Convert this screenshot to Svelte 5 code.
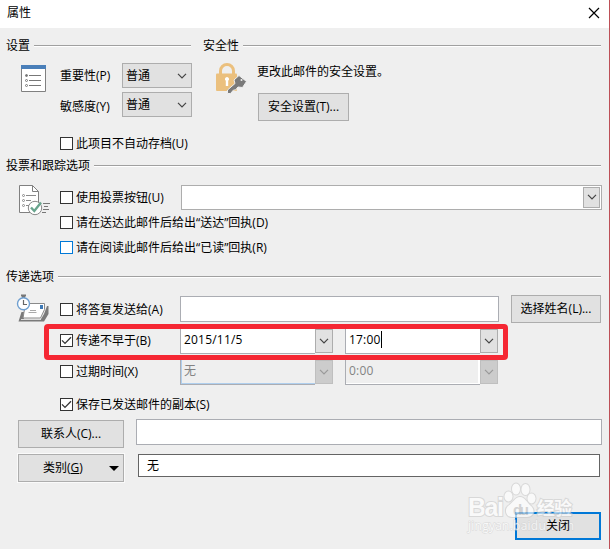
<script lang="ts">
	let readReceipt = $state(false);
	let deliveredReceipt = $state(false);
	let noArchive = $state(false);
	let useVoting = $state(false);
	let replyTo = $state(false);
	let delayed = $state(true);
	let expires = $state(false);
	let saveCopy = $state(true);
</script>

{#snippet heading(title: string)}
	<div class="heading">
		<span>{title}</span>
		<i class="rule"></i>
	</div>
{/snippet}

{#snippet chevron()}
	<svg class="chevron" width="10" height="6" viewBox="0 0 10 6">
		<path d="M1 .8 5 4.8 9 .8" fill="none" stroke="currentColor" stroke-width="1.2" />
	</svg>
{/snippet}

{#snippet check(label: string, checked: boolean, toggle: () => void, focused = false)}
	<div class="check" class:focused role="checkbox" aria-checked={checked} tabindex="-1" onclick={toggle} onkeydown={toggle}>
		<span class="box">
			{#if checked}
				<svg width="11" height="11" viewBox="0 0 11 11">
					<path d="M1 5.4 4 8.4 10 2.2" fill="none" stroke="#333" stroke-width="1.3" />
				</svg>
			{/if}
		</span>
		<span class="label">{label}</span>
	</div>
{/snippet}

{#snippet picker(value: string, disabled = false, caret = false, hot = false)}
	<div class="picker" class:disabled class:hot>
		<div class="field">{value}{#if caret}<i class="caret"></i>{/if}</div>
		<div class="drop">{@render chevron()}</div>
	</div>
{/snippet}

<div class="dialog">
	<header>
		<span>属性</span>
		<svg width="12" height="12" viewBox="0 0 12 12">
			<path d="M1 1 11 11M11 1 1 11" stroke="#000" stroke-width="1.2" />
		</svg>
	</header>

	<div class="top">
		<section class="settings">
			{@render heading('设置')}
			<div class="settings-body">
				<svg class="icon-list" width="25" height="27" viewBox="0 0 25 27">
					<path d="M.5 3.5h24v23H.5z" fill="#fff" stroke="#808080" />
					<path d="M0 0h25v4H0z" fill="#4a7fb9" />
					<g fill="#fff" stroke="#777">
						<circle cx="5.5" cy="10.5" r="1" fill="#777" />
						<circle cx="5.5" cy="15.5" r="1" />
						<circle cx="5.5" cy="20.5" r="1" />
						<path d="M8 10.5h12M8 15.5h12M8 20.5h12" />
					</g>
				</svg>
				<div class="levels">
					<div class="level">
						<span>重要性(P)</span>
						<div class="select">普通{@render chevron()}</div>
					</div>
					<div class="level second">
						<span>敏感度(Y)</span>
						<div class="select">普通{@render chevron()}</div>
					</div>
				</div>
			</div>
			<div class="archive">
				{@render check('此项目不自动存档(U)', noArchive, () => (noArchive = !noArchive))}
			</div>
		</section>

		<section class="security">
			{@render heading('安全性')}
			<div class="security-body">
				<svg width="31" height="32" viewBox="0 0 31 32">
					<path d="M4.5 11V8a6.5 6.5 0 0 1 13 0v3" fill="none" stroke="#ebc07e" stroke-width="3" />
					<rect y="10.5" width="21" height="17.5" rx="1" fill="#ebc07e" />
					<path d="M11 14a2.1 2.1 0 0 1 1.2 3.8V23H9.800v-5.200A2.100 2.100 0 0 1 11 14z" fill="#fff" />
					<path d="M11.500 27 19 20.500 18 17l5-4.500 7.500 6-4 6-4.500-.5-2.500 3h-2l-3 3.500h-3z" fill="#7a7a7a" stroke="#efefef" />
					<circle cx="25.500" cy="17" r="1" fill="#efefef" />
				</svg>
				<div>
					<p>更改此邮件的安全设置。</p>
					<button class="secure-btn">安全设置(T)...</button>
				</div>
			</div>
		</section>
	</div>

	<section class="voting">
		{@render heading('投票和跟踪选项')}
		<div class="with-icon">
			<svg class="icon-vote" width="32" height="32" viewBox="0 0 32 32">
				<path d="M1.500 1.500h13l6 6v21h-19z" fill="#fff" stroke="#808080" />
				<path d="M14.500 1.500v6h6" fill="none" stroke="#808080" />
				<g fill="#fff" stroke="#8a8a8a">
					<circle cx="5.500" cy="11.500" r="1" />
					<circle cx="5.500" cy="16.500" r="1" />
					<circle cx="5.500" cy="21.500" r="1" />
					<path d="M8 11.500h10M8 16.500h5M8 21.500h3" />
				</g>
				<circle cx="17" cy="24" r="6.700" fill="#fff" stroke="#888" />
				<path d="M13 23.500 16.300 27 23 18.500" fill="none" stroke="#69a58e" stroke-width="2.400" />
				<path d="M25 19.500h7M26 22.500h4M25 25.500h6M24 28.500h4" stroke="#777" />
			</svg>
			<div class="checks">
				<div class="vote-row">
					{@render check('使用投票按钮(U)', useVoting, () => (useVoting = !useVoting))}
					<div class="combo"><div class="drop">{@render chevron()}</div></div>
				</div>
				<div class="receipt">
					{@render check('请在送达此邮件后给出“送达”回执(D)', deliveredReceipt, () => (deliveredReceipt = !deliveredReceipt))}
				</div>
				<div class="receipt">
					{@render check('请在阅读此邮件后给出“已读”回执(R)', readReceipt, () => (readReceipt = !readReceipt), true)}
				</div>
			</div>
		</div>
	</section>

	<section class="delivery">
		{@render heading('传递选项')}
		<div class="with-icon">
			<svg class="icon-mail" width="33" height="30" viewBox="0 0 33 30">
				<path d="M2.500 27.500 5.500 18H8v7h17l3-5 3-8h1.500v8L28 27.500z" fill="#7a7a7a" />
				<path d="M5 25.500h20" stroke="#ddd" />
				<path d="M9.500 9.500h19v6l-4 8.500H7z" fill="#fff" stroke="#8a8a8a" />
				<path d="M14 16.500h6M12.500 18.500h8" stroke="#aaa" />
				<path d="M24 11h3v4h-3z" fill="#3d78b5" />
				<path d="M5 .5h5v2H9V4H6V2.500H5z" fill="#777" />
				<circle cx="7.500" cy="9.800" r="6" fill="#fff" stroke="#6f9fd0" stroke-width="1.400" />
				<path d="M7.500 6v4.500H11" fill="none" stroke="#666" stroke-width="1.200" />
			</svg>
			<div class="checks">
				<div class="reply-row">
					{@render check('将答复发送给(A)', replyTo, () => (replyTo = !replyTo))}
					<div class="text-input"></div>
					<button>选择姓名(L)...</button>
				</div>
				<div class="marked">
					<div class="time-row">
						{@render check('传递不早于(B)', delayed, () => (delayed = !delayed))}
						{@render picker('2015/11/5')}
						{@render picker('17:00', false, true)}
					</div>
				</div>
				<div class="time-row">
					{@render check('过期时间(X)', expires, () => (expires = !expires))}
					{@render picker('无', true, false, true)}
					{@render picker('0:00', true)}
				</div>
				<div class="save-row">
					{@render check('保存已发送邮件的副本(S)', saveCopy, () => (saveCopy = !saveCopy))}
				</div>
			</div>
		</div>
	</section>

	<div class="contacts">
		<button>联系人(C)...</button>
		<div class="text-input"></div>
	</div>
	<div class="categories">
		<button>
			<span>类别(<u>G</u>)</span>
			<svg width="10" height="5" viewBox="0 0 10 5"><path d="M0 0h10L5 5z" /></svg>
		</button>
		<div class="category">无</div>
	</div>

	<footer>
		<button class="primary"><span>关闭</span></button>
	</footer>

	<svg class="watermark" width="112" height="58" viewBox="0 0 112 58">
		<g fill="#fff" stroke="#cdcdcd" stroke-width="2" paint-order="stroke">
			<text class="brand" x="2" y="35" textLength="36">Bai</text>
			<ellipse cx="42.500" cy="15.500" rx="4" ry="5" />
			<ellipse cx="50" cy="8" rx="4" ry="5.500" />
			<ellipse cx="59.500" cy="8.500" rx="4" ry="5.500" />
			<ellipse cx="65.500" cy="17.500" rx="4" ry="5" />
			<path d="M54 16c5 0 7 6 11 9 5 5 2 11-4 11H46c-6 0-8-7-4-11 5-3 7-9 12-9z" />
			<text class="cn" x="71" y="34" textLength="35">经验</text>
		</g>
		<text class="du" x="47" y="34" textLength="16">du</text>
		<text class="site" x="2" y="49" textLength="106">jingyan.baidu.com</text>
	</svg>
</div>

<style>
	:global(body) {
		margin: 0;
	}

	.dialog {
		position: relative;
		box-sizing: border-box;
		width: 610px;
		height: 549px;
		overflow: hidden;
		background: #efefef;
		border-right: 1px solid #bd5057;
		color: #000;
		font: 12px/18px 'Open Sans', 'Noto Sans CJK SC', sans-serif;
		white-space: nowrap;
	}

	header {
		display: flex;
		justify-content: space-between;
		align-items: center;
		box-sizing: border-box;
		height: 28px;
		padding: 0 9px 3px 7px;
		background: #fff;
	}

	button {
		box-sizing: border-box;
		height: 28px;
		padding: 0;
		border: 1px solid #adadad;
		background: #e1e1e1;
		color: #000;
		font: inherit;
		white-space: nowrap;
	}

	.heading {
		display: flex;
		align-items: center;
		gap: 4px;
		height: 18px;
	}

	.rule {
		flex: 1;
		height: 1px;
		background: #a0a0a0;
		border-bottom: 1px solid #fff;
	}

	.chevron {
		display: block;
		color: #444;
	}

	.top {
		display: flex;
		gap: 12px;
		height: 129px;
		padding: 9px 8px 0 6px;
		box-sizing: border-box;
	}

	.settings {
		width: 185px;
	}

	.settings-body {
		display: flex;
		gap: 14px;
		padding: 8px 0 0 15px;
	}

	.icon-list {
		flex-shrink: 0;
		margin-top: 2px;
	}

	.level {
		display: flex;
		width: 132px;
		justify-content: space-between;
		align-items: center;
	}

	.second {
		margin-top: 4px;
	}

	.second > span {
		padding-top: 4px;
	}

	.select {
		display: flex;
		box-sizing: border-box;
		align-items: center;
		justify-content: space-between;
		width: 70px;
		height: 25px;
		padding: 0 4px 0 3px;
		border: 1px solid #adadad;
		background: #e1e1e1;
	}

	.archive {
		padding: 17px 0 0 54px;
	}

	.security {
		flex: 1;
	}

	.security-body {
		display: flex;
		gap: 10px;
		padding: 8px 0 0 13px;
	}

	p {
		margin: 0 0 12px;
	}

	.secure-btn {
		width: 91px;
		margin-left: 1px;
	}

	.check {
		display: flex;
		align-items: center;
		gap: 3px;
		height: 18px;
	}

	.label {
		padding-top: 1px;
	}

	.box {
		box-sizing: border-box;
		width: 13px;
		height: 13px;
		border: 1px solid #333;
		background: #fff;
	}

	.box svg {
		display: block;
	}

	.focused .box {
		border-color: #0078d7;
	}

	.voting {
		height: 111px;
		padding: 0 8px 0 6px;
	}

	.with-icon {
		display: flex;
	}

	.icon-vote {
		margin: 9px 10px 0 12px;
	}

	.icon-mail {
		margin: 8px 11px 0 10px;
	}

	.checks {
		flex: 1;
	}

	.vote-row {
		display: flex;
		justify-content: space-between;
		align-items: center;
		padding-top: 8px;
		height: 28px;
		margin-right: -1px;
	}

	.combo {
		display: flex;
		justify-content: flex-end;
		box-sizing: border-box;
		width: 421px;
		height: 25px;
		padding: 1px;
		border: 1px solid #adadad;
		background: #fff;
	}

	.drop {
		display: flex;
		box-sizing: border-box;
		align-items: center;
		justify-content: center;
		width: 18px;
		border: 1px solid #adadad;
		background: #e1e1e1;
	}

	.combo .drop {
		width: 17px;
	}

	.receipt {
		height: 25px;
	}

	.vote-row + .receipt {
		margin-top: 2px;
	}

	.delivery {
		height: 152px;
		padding: 0 8px 0 6px;
	}

	.reply-row {
		display: flex;
		align-items: center;
		padding-top: 9px;
	}

	.reply-row .check,
	.time-row .check {
		width: 120px;
	}

	.text-input {
		box-sizing: border-box;
		height: 26px;
		border: 1px solid #abadb3;
		background: #fff;
	}

	.reply-row .text-input {
		width: 319px;
		margin-right: 12px;
	}

	.reply-row button {
		width: 90px;
	}

	.marked {
		box-sizing: border-box;
		width: 464px;
		height: 36px;
		margin: 1px 0 0 -16px;
		padding-left: 11px;
		border: 5px solid #f52733;
		border-radius: 4px;
	}

	.time-row {
		display: flex;
		height: 24px;
	}

	.time-row .check {
		margin-top: 2px;
	}

	.picker {
		display: flex;
		width: 153px;
		height: 24px;
	}

	.picker + .picker {
		margin-left: 12px;
	}

	.field {
		display: flex;
		box-sizing: border-box;
		width: 135px;
		height: 25px;
		padding: 2px 3px 0;
		border: 1px solid #abadb3;
		border-top: 0;
		border-right: 0;
		background: #fff;
		letter-spacing: 0.2px;
	}

	.caret {
		width: 1px;
		height: 17px;
		background: #000;
	}

	.disabled .field {
		background: #efefef;
		color: #838383;
		box-shadow: inset 0 -1px #fff, inset -2px 0 #fff;
	}

	.disabled.hot .field {
		box-shadow: inset 1px -1px #afcfee;
	}

	.disabled .drop {
		border-color: #bfbfbf;
		background: #ccc;
	}

	.disabled .chevron {
		color: #9a9a9a;
	}

	.save-row {
		padding-top: 11px;
	}

	.contacts {
		display: flex;
		padding: 0 0 0 18px;
	}

	.contacts button {
		width: 106px;
	}

	.contacts .text-input {
		width: 466px;
		margin: -1px 0 0 12px;
	}

	.categories {
		display: flex;
		align-items: flex-start;
		padding: 6px 0 0 18px;
	}

	.categories button {
		display: flex;
		align-items: center;
		justify-content: space-between;
		width: 106px;
		padding: 0 4px 0 24px;
		box-shadow: 0 0 0 1px #fafafa;
	}

	.category {
		box-sizing: border-box;
		width: 462px;
		height: 23px;
		margin-left: 14px;
		padding: 2px 8px;
		border: 1px solid #646464;
		background: #fff;
	}

	footer {
		display: flex;
		justify-content: flex-end;
		padding: 30px 8px 0 0;
	}

	.primary {
		width: 86px;
		border: 2px solid #0078d7;
	}

	/* keeps the caption above the watermark */
	.primary span {
		position: relative;
		z-index: 1;
	}

	.watermark {
		position: absolute;
		left: 466px;
		top: 481px;
		opacity: 0.65;
		pointer-events: none;
	}

	.brand {
		font: bold 25px 'Liberation Sans', sans-serif;
	}

	.cn {
		font: bold 18px 'Noto Sans CJK SC', sans-serif;
	}

	.du {
		fill: #c4c4c4;
		font: bold 15px 'Liberation Sans', sans-serif;
	}

	.site {
		fill: #fff;
		stroke: #cdcdcd;
		stroke-width: 1px;
		paint-order: stroke;
		font: 12px 'Open Sans', sans-serif;
	}
</style>
